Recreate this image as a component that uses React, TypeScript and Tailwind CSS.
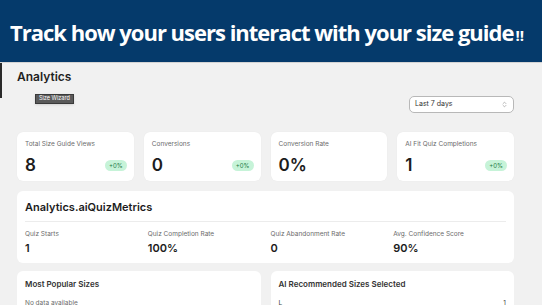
import { ChevronsUpDown } from "lucide-react";

const stats = [
  { label: "Total Size Guide Views", value: "8", badge: true },
  { label: "Conversions", value: "0", badge: true },
  { label: "Conversion Rate", value: "0%", badge: false },
  { label: "AI Fit Quiz Completions", value: "1", badge: true },
];

const quiz = [
  { label: "Quiz Starts", value: "1" },
  { label: "Quiz Completion Rate", value: "100%" },
  { label: "Quiz Abandonment Rate", value: "0" },
  { label: "Avg. Confidence Score", value: "90%" },
];

const App = () => {
  return (
    <div className="w-[542px] h-[305px] overflow-hidden bg-[#f1f1f1] font-['Inter',sans-serif]">
      <div className="h-[62px] bg-[#053a6b] flex items-center pl-[10px] pt-[2px]">
        <h1 className="text-white font-['Open_Sans',sans-serif] font-bold text-[22px] tracking-[-1px] leading-none whitespace-nowrap">
          Track how your users interact with your size guide
          <span className="text-[15px] tracking-normal ml-[2px]">!!</span>
        </h1>
      </div>
      <div className="h-[1px] bg-[#d4d4d4]" />

      <div className="flex">
        <div className="w-[2px] h-[35px] bg-[#2a2a2a]" />
        <div className="flex-1 pl-[15px] pr-[28px]">
          <div className="pt-[6px] text-[12px] font-semibold text-[#1f1f1f] leading-[16px]">
            Analytics
          </div>
          <div className="flex justify-between items-start mt-[8px]">
            <div className="ml-[18px] mt-[1px] bg-[#5a5a5a] border border-[#3a3a3a] px-[3px] h-[10px] flex items-center text-[5.5px] text-white leading-none shadow-sm">
              Size Wizard
            </div>
            <div className="w-[105px] h-[17px] mt-[3px] bg-white border border-[#b8b8b8] rounded-[5px] flex items-center justify-between px-[5px] text-[7px] text-[#333]">
              Last 7 days
              <ChevronsUpDown className="w-[7px] h-[7px] text-[#888]" strokeWidth={2} />
            </div>
          </div>

          <div className="grid grid-cols-4 gap-[10px] mt-[19px]">
            {stats.map((s) => (
              <div key={s.label} className="bg-white rounded-[6px] h-[49px] px-[8px] pt-[8px] shadow-[0_0_1px_rgba(0,0,0,0.08)]">
                <div className="text-[6.5px] text-[#6b6b6b] leading-[8px]">{s.label}</div>
                <div className="flex items-center justify-between mt-[8px]">
                  <span className="text-[17px] font-semibold text-[#1c1c1c] leading-[18px]">{s.value}</span>
                  {s.badge && (
                    <span className="bg-[#c6f3d8] text-[#1d7a45] text-[6px] rounded-full px-[4px] h-[11px] flex items-center mr-[-1px]">
                      +0%
                    </span>
                  )}
                </div>
              </div>
            ))}
          </div>

          <div className="bg-white rounded-[6px] mt-[10px] px-[8px] pt-[9px] pb-[8px]">
            <div className="text-[11px] font-semibold text-[#1c1c1c] leading-[14px]">
              Analytics.aiQuizMetrics
            </div>
            <div className="h-[1px] bg-[#ececec] mt-[7px]" />
            <div className="grid grid-cols-4 gap-[10px] mt-[8px]">
              {quiz.map((q) => (
                <div key={q.label}>
                  <div className="text-[6.5px] text-[#6b6b6b] leading-[8px]">{q.label}</div>
                  <div className="text-[11px] font-semibold text-[#1c1c1c] leading-[14px] mt-[3px]">{q.value}</div>
                </div>
              ))}
            </div>
          </div>

          <div className="grid grid-cols-2 gap-[10px] mt-[8px]">
            <div className="bg-white rounded-[6px] px-[8px] pt-[8px] h-[60px]">
              <div className="text-[8px] font-semibold text-[#333] leading-[10px]">Most Popular Sizes</div>
              <div className="text-[6.5px] text-[#6b6b6b] leading-[8px] mt-[10px]">No data available</div>
            </div>
            <div className="bg-white rounded-[6px] px-[8px] pt-[8px] h-[60px]">
              <div className="text-[8px] font-semibold text-[#333] leading-[10px]">AI Recommended Sizes Selected</div>
              <div className="flex justify-between text-[6.5px] text-[#444] leading-[8px] mt-[10px]">
                <span>L</span>
                <span>1</span>
              </div>
            </div>
          </div>
        </div>
      </div>
    </div>
  );
};

export default App;
